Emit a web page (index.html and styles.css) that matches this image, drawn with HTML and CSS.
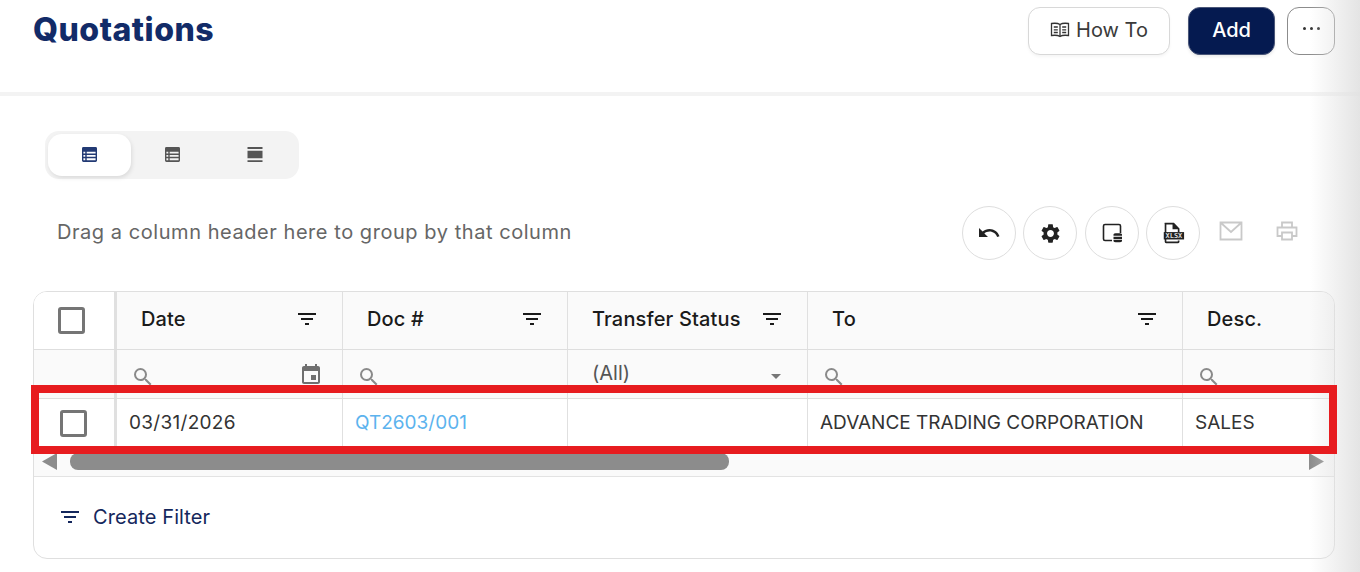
FILE: index.html
```html
<html>
<head>
<link rel="stylesheet" href="styles.css">
</head>
<body>
<svg class="defs" width="0" height="0">
	<symbol id="i-filter" viewBox="0 0 24 24"><path d="M10 18h4v-2h-4v2zM3 6v2h18V6H3zm3 7h12v-2H6v2z"/></symbol>
	<symbol id="i-search" viewBox="0 0 24 24"><path d="M15.5 14h-.79l-.28-.27A6.47 6.47 0 0 0 16 9.5 6.5 6.5 0 1 0 9.5 16c1.61 0 3.09-.59 4.23-1.57l.27.28v.79l5 4.99L20.49 19l-4.99-5zm-6 0C7.01 14 5 11.99 5 9.5S7.01 5 9.5 5 14 7.01 14 9.5 11.99 14 9.5 14z"/></symbol>
	<symbol id="i-table" viewBox="0 0 16 16"><path fill-rule="evenodd" d="M1.5 0h13A1.5 1.5 0 0 1 16 1.500V14.500A1.500 1.500 0 0 1 14.500 16H1.500A1.500 1.500 0 0 1 0 14.500V1.500A1.500 1.500 0 0 1 1.500 0zM1.500 5v2h2V5zM5 5v2h9.500V5zM1.500 8.500v2h2v-2zM5 8.500v2h9.500v-2zM1.500 12v2h2v-2zM5 12v2h9.500v-2z"/></symbol>
</svg>

<header class="top">
	<h1>Quotations</h1>
	<div class="top-actions">
		<button class="btn btn-how">
			<svg width="20" height="20" viewBox="0 0 20 20" fill="none" stroke="#333" stroke-width="1.300"><path d="M10 4.500C8.500 3.500 5 3 1.500 3.500v12c3.500-.5 7 0 8.500 1 1.500-1 5-1.500 8.500-1v-12C15 3 11.500 3.500 10 4.500zM10 4.500v12M3.800 7h4M3.800 9.800h4M3.800 12.500h4M12.200 7h4M12.200 9.800h4M12.200 12.500h4"/></svg>
			How To
		</button>
		<button class="btn btn-add">Add</button>
		<button class="btn btn-more"><span></span><span></span><span></span></button>
	</div>
</header>

<main class="content">
	<div class="density">
		<button class="density-item active"><svg width="15" height="15" fill="#223a74"><use href="#i-table"/></svg></button>
		<button class="density-item"><svg width="15" height="15" fill="#555"><use href="#i-table"/></svg></button>
		<button class="density-item">
			<svg width="16" height="15" viewBox="0 0 16 16" fill="#555"><path d="M0 0h16v2H0zM0 4h16v8H0zM0 14h16v2H0z"/></svg>
		</button>
	</div>

	<div class="toolbar">
		<span class="group-hint">Drag a column header here to group by that column</span>
		<div class="tools">
			<button class="tool"><svg width="24" height="24" viewBox="0 0 24 24" fill="#222"><path d="M12.500 8c-2.650 0-5.050.99-6.900 2.600L2 7v9h9l-3.620-3.620c1.390-1.160 3.160-1.880 5.120-1.880 3.540 0 6.550 2.310 7.600 5.500l2.370-.78C21.080 11.030 17.150 8 12.500 8z"/></svg></button>
			<button class="tool tool-gear"><svg width="23" height="23" viewBox="0 0 24 24" fill="#222"><path d="M19.140 12.940c.04-.3.06-.61.06-.94 0-.32-.02-.64-.07-.94l2.030-1.580c.18-.14.23-.41.12-.61l-1.920-3.320c-.12-.22-.37-.29-.59-.22l-2.390.96c-.5-.38-1.030-.7-1.620-.94l-.36-2.540c-.04-.24-.24-.41-.48-.41h-3.840c-.24 0-.43.17-.47.41l-.36 2.540c-.59.24-1.130.57-1.620.94l-2.390-.96c-.22-.08-.47 0-.59.22L2.740 8.870c-.12.21-.08.47.12.61l2.030 1.580c-.05.3-.09.63-.09.94s.02.64.07.94l-2.030 1.580c-.18.14-.23.41-.12.61l1.920 3.320c.12.22.37.29.59.22l2.390-.96c.5.38 1.030.7 1.620.94l.36 2.540c.05.24.24.41.48.41h3.840c.24 0 .44-.17.47-.41l.36-2.540c.59-.24 1.130-.56 1.620-.94l2.390.96c.22.08.47 0 .59-.22l1.920-3.320c.12-.22.07-.47-.12-.61l-2.010-1.580zM12 15.600c-1.980 0-3.600-1.620-3.600-3.600s1.620-3.600 3.600-3.600 3.600 1.620 3.600 3.600-1.620 3.600-3.600 3.600z"/></svg></button>
			<button class="tool"><svg width="24" height="24" viewBox="0 0 24 24"><path d="M12 19.500H5a1.500 1.500 0 0 1-1.500-1.500V5A1.500 1.500 0 0 1 5 3.500h14A1.500 1.500 0 0 1 20.500 5v7" fill="none" stroke="#222" stroke-width="1.600"/><path fill="#222" d="M13.500 13.500c0-.8 1-1.300 4.200-1.300s4.300.5 4.300 1.300v1.300h-8.500zM13.500 15.700H22v2.200h-8.500zM13.500 18.700H22v1.300c0 .8-1 1.300-4.300 1.300s-4.200-.5-4.200-1.300z"/></svg></button>
			<button class="tool"><svg width="24" height="24" viewBox="0 0 26 26"><path fill="#222" fill-rule="evenodd" d="M4 2h10l6 6v4h-1.800V9h-5.700V3.800H5.800v18.400h12.400V21H20v1.500A1.500 1.500 0 0 1 18.500 24h-13A1.500 1.500 0 0 1 4 22.500v-19A1.500 1.500 0 0 1 4 2z"/><rect x="3" y="12" width="22" height="8" fill="#222"/><text class="xlsx" x="14" y="18.600" text-anchor="middle">XLSX</text></svg></button>
			<span class="tool-off tool-mail"><svg width="26" height="22" viewBox="0 0 26 22" fill="none" stroke="#c9c9c9" stroke-width="1.800"><path d="M2.500 2.500h21v17h-21zM2.500 2.500 13 12l10.500-9.500"/></svg></span>
			<span class="tool-off tool-print"><svg width="24" height="24" viewBox="0 0 24 24" fill="none" stroke="#c9c9c9" stroke-width="1.800"><path d="M7 8V3.500h10V8M7 17H2.500V8.500h19V17H17M7 13.500h10v7H7z"/></svg></span>
		</div>
	</div>

	<section class="grid-box">
		<div class="row row-head">
			<div class="cell c-sel"><span class="check"></span></div>
			<div class="cell c-date"><span>Date</span><svg class="ic-filter"><use href="#i-filter"/></svg></div>
			<div class="cell c-doc"><span>Doc #</span><svg class="ic-filter"><use href="#i-filter"/></svg></div>
			<div class="cell c-status"><span>Transfer Status</span><svg class="ic-filter"><use href="#i-filter"/></svg></div>
			<div class="cell c-to"><span>To</span><svg class="ic-filter"><use href="#i-filter"/></svg></div>
			<div class="cell c-desc"><span>Desc.</span></div>
		</div>
		<div class="row row-filter">
			<div class="cell c-sel"></div>
			<div class="cell c-date">
				<svg class="ic-search"><use href="#i-search"/></svg>
				<svg class="ic-cal" viewBox="0 0 24 24" fill="#6f6f6f"><path d="M17 12h-5v5h5v-5zM16 1v2H8V1H6v2H5c-1.110 0-1.990.9-1.990 2L3 19c0 1.100.89 2 2 2h14c1.100 0 2-.9 2-2V5c0-1.100-.9-2-2-2h-1V1h-2zm3 18H5V8h14v11z"/></svg>
			</div>
			<div class="cell c-doc"><svg class="ic-search"><use href="#i-search"/></svg></div>
			<div class="cell c-status"><span class="all">(All)</span><i class="caret"></i></div>
			<div class="cell c-to"><svg class="ic-search"><use href="#i-search"/></svg></div>
			<div class="cell c-desc"><svg class="ic-search"><use href="#i-search"/></svg></div>
		</div>
		<div class="row row-data">
			<div class="cell c-sel"><span class="check"></span></div>
			<div class="cell c-date"><span class="date-val">03/31/2026</span></div>
			<div class="cell c-doc"><a class="doc-link">QT2603/001</a></div>
			<div class="cell c-status"></div>
			<div class="cell c-to">ADVANCE TRADING CORPORATION</div>
			<div class="cell c-desc">SALES</div>
		</div>
		<div class="scrollbar">
			<i class="arrow arrow-left"></i>
			<div class="track"><div class="thumb"></div></div>
			<i class="arrow arrow-right"></i>
		</div>
		<div class="grid-foot">
			<svg class="ic-create"><use href="#i-filter"/></svg>
			<span>Create Filter</span>
		</div>
	</section>
</main>

<div class="edge-shade"></div>
<div class="highlight"></div>
</body>
</html>
```

FILE: styles.css
```css
* {
	box-sizing: border-box;
}

html, body {
	height: 572px;
	overflow: hidden;
}

body {
	margin: 0;
	width: 1360px;
	position: relative;
	background: #fff;
	font-family: Inter, "Liberation Sans", sans-serif;
	color: #333;
}

button {
	font-family: inherit;
	cursor: pointer;
}

.defs {
	position: absolute;
}

.top {
	height: 96px;
	padding: 7px 25px 0 33px;
	border-bottom: 4px solid #f3f3f3;
	display: flex;
	justify-content: space-between;
	align-items: flex-start;
}

.top h1 {
	margin: 4px 0 0;
	font-size: 32px;
	line-height: 38px;
	font-weight: 800;
	letter-spacing: 0.5px;
	color: #122b68;
}

.top-actions {
	display: flex;
	gap: 12px;
}

.btn {
	height: 48px;
	padding: 0 0 3px;
	border-radius: 12px;
	font-size: 20px;
	display: flex;
	align-items: center;
	justify-content: center;
}

.btn-how {
	width: 142px;
	gap: 6px;
	background: #fff;
	border: 1px solid #d8d8d8;
	color: #3a3a3a;
	margin-right: 6px;
	box-shadow: 0 2px 3px rgba(0, 0, 0, 0.04);
}

.btn-add {
	width: 87px;
	background: #051a50;
	border: 1px solid #4a5678;
	color: #fff;
	font-weight: 500;
	box-shadow: 0 2px 3px rgba(0, 0, 0, 0.08);
}

.btn-more {
	width: 48px;
	gap: 4px;
	padding-bottom: 5px;
	background: #fff;
	border: 1px solid #8c8c8c;
}

.btn-more span {
	width: 3px;
	height: 3px;
	border-radius: 50%;
	background: #333;
}

.content {
	padding: 35px 25px 0 33px;
}

.density {
	margin-left: 12px;
	width: 254px;
	height: 48px;
	padding: 3px;
	border-radius: 14px;
	background: #f3f3f3;
	display: flex;
}

.density-item {
	width: 83px;
	height: 42px;
	padding: 0 0 2px;
	border: 0;
	border-radius: 14px;
	background: none;
	display: flex;
	align-items: center;
	justify-content: center;
}

.density-item.active {
	background: #fff;
	box-shadow: 1px 2px 4px rgba(0, 0, 0, 0.1);
}

.toolbar {
	height: 112px;
	padding: 27px 0 0 24px;
	display: flex;
	justify-content: space-between;
	align-items: flex-start;
}

.group-hint {
	margin-top: 14px;
	font-size: 20px;
	line-height: 24px;
	letter-spacing: 0.55px;
	color: #666;
}

.tools {
	display: flex;
	align-items: center;
	gap: 7px;
	padding-right: 35px;
}

.tool {
	width: 54px;
	height: 54px;
	border: 1px solid #dedede;
	border-radius: 50%;
	background: #fff;
	padding: 0;
	display: flex;
	align-items: center;
	justify-content: center;
}

.tool-gear {
	margin-right: 1px;
}

.tool-off {
	width: 26px;
	height: 26px;
	margin-bottom: 4px;
	display: flex;
	align-items: center;
	justify-content: center;
}

.tool-mail {
	margin-left: 11px;
}

.tool-print {
	margin-left: 23px;
}

.xlsx {
	font-family: "DejaVu Sans Mono", monospace;
	font-size: 7.500px;
	font-weight: 700;
	fill: #ddd;
}

.grid-box {
	width: 1302px;
	height: 268px;
	border: 1px solid #dfdfdf;
	border-radius: 14px;
	overflow: hidden;
}

.row {
	display: flex;
	border-bottom: 1px solid #dedede;
}

.row-head {
	height: 58px;
	background: #fafafa;
	font-size: 20px;
	font-weight: 500;
	letter-spacing: 0.15px;
	color: #1a1a1a;
}

.row-filter {
	height: 49px;
	background: #fafafa;
}

.row-data {
	height: 48px;
	border-bottom: 0;
	font-size: 19px;
	color: #333;
}

.cell {
	height: 100%;
	border-right: 1px solid #e0e0e0;
	display: flex;
	align-items: center;
	justify-content: space-between;
	flex: none;
}

.c-sel { width: 83px; border-right: 3px solid #e0e0e0; justify-content: center; }
.c-date { width: 226px; }
.c-doc { width: 225px; }
.c-status { width: 240px; }
.c-to { width: 375px; }
.c-desc { width: 151px; border-right: 0; }

.row-head .cell:not(.c-sel) {
	padding: 0 23px 4px 24px;
}

.row-data .cell:not(.c-sel) {
	padding: 0 12px 2px 12px;
}

.check {
	width: 27px;
	height: 27px;
	border: 3px solid #757575;
	border-radius: 3px;
	background: #fff;
}

.row-data .check {
	margin-right: 2px;
}

.row-head .check {
	margin-right: 5px;
}

.row-head .c-sel {
	background: #fff;
}

.date-val {
	letter-spacing: 0.3px;
}

.row-filter .cell {
	padding: 0 18px 0 14px;
	align-items: flex-end;
}

.ic-filter {
	width: 24px;
	height: 24px;
	fill: #1a1a1a;
}

.ic-search {
	width: 24px;
	height: 24px;
	fill: #8a8a8a;
	margin-bottom: 9px;
}

.ic-cal {
	width: 24px;
	height: 24px;
	margin: 0 1px 11px 0;
}

.row-filter .c-status {
	padding: 0 24px;
}

.all {
	font-size: 20px;
	line-height: 24px;
	color: #555;
	margin-bottom: 13px;
}

.caret {
	width: 0;
	height: 0;
	border: 5px solid transparent;
	border-top: 5px solid #777;
	border-bottom: 0;
	margin: 0 2px 19px 0;
}

.doc-link {
	color: #5cb3ee;
}

.scrollbar {
	height: 30px;
	padding: 6px 10px 0 8px;
	background: #fafafa;
	border-bottom: 1px solid #e3e3e3;
	display: flex;
	align-items: flex-start;
}

.track {
	flex: 1;
	margin: 0 13px;
}

.thumb {
	width: 659px;
	height: 17px;
	border-radius: 8px;
	background: #8c8c8c;
}

.arrow {
	width: 15px;
	height: 17px;
	flex: none;
	background: #8c8c8c;
}

.arrow-left {
	clip-path: polygon(100% 0, 100% 100%, 0 50%);
}

.arrow-right {
	clip-path: polygon(0 0, 0 100%, 100% 50%);
}

.grid-foot {
	height: 80px;
	padding: 0 0 0 24px;
	display: flex;
	align-items: center;
	gap: 11px;
	font-size: 20px;
	letter-spacing: 0.1px;
	color: #14275c;
}

.ic-create {
	width: 24px;
	height: 24px;
	fill: #14275c;
}

.edge-shade {
	position: absolute;
	top: 0;
	right: 0;
	width: 50px;
	height: 572px;
	background: linear-gradient(to right, rgba(225, 225, 225, 0), rgba(225, 225, 225, 0.9));
	pointer-events: none;
}

.highlight {
	position: absolute;
	left: 31px;
	top: 385px;
	width: 1306px;
	height: 69px;
	border: 8px solid #e71c1f;
	pointer-events: none;
}
```
